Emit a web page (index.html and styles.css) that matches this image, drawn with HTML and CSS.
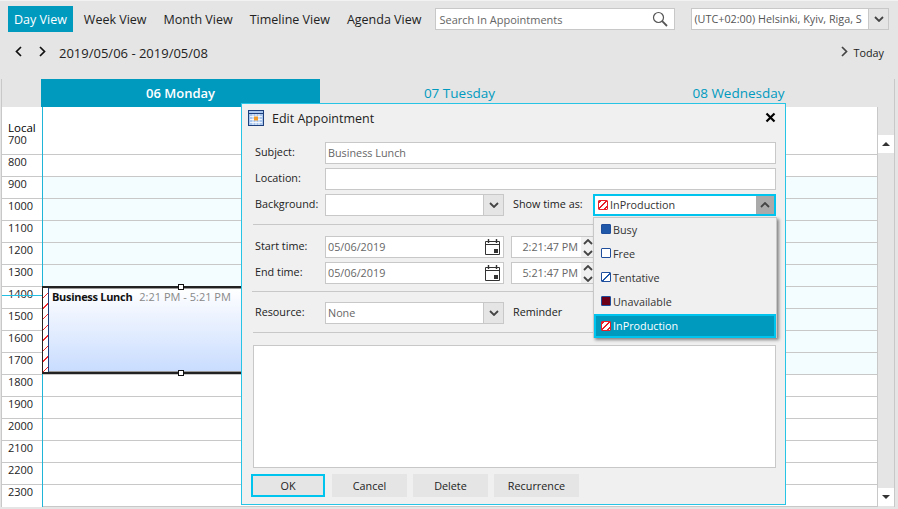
FILE: index.html
```html
<!DOCTYPE html>
<html lang="en">
<head>
    <meta charset="UTF-8">
    <meta name="viewport" content="width=device-width, initial-scale=1.0">
    <title>Scheduler</title>
    <link rel="stylesheet" href="styles.css">
</head>
<body>
    <div class="toolbar">
        <a class="tab active">Day View</a>
        <a class="tab">Week View</a>
        <a class="tab">Month View</a>
        <a class="tab">Timeline View</a>
        <a class="tab">Agenda View</a>
        <div class="search">
            <span>Search In Appointments</span>
            <svg width="16" height="16" viewBox="0 0 16 16" fill="none" stroke="#555">
                <circle cx="6.5" cy="6.5" r="5" stroke-width="1.2"/>
                <path d="M10.2 10.2L15 15" stroke-width="1.8"/>
            </svg>
        </div>
        <div class="timezone">
            <span>(UTC+02:00) Helsinki, Kyiv, Riga, S</span>
            <div class="drop-btn"><svg class="chev" viewBox="0 0 10 6"><path d="M1 1l4 4 4-4"/></svg></div>
        </div>
    </div>

    <div class="navrow">
        <svg class="nav-chev" viewBox="0 0 7 11"><path d="M6 1L1.5 5.5 6 10"/></svg>
        <svg class="nav-chev second" viewBox="0 0 7 11"><path d="M1 1l4.5 4.5L1 10"/></svg>
        <span class="range">2019/05/06 - 2019/05/08</span>
        <div class="today">
            <svg class="nav-chev grey" viewBox="0 0 7 11"><path d="M1 1l4.5 4.5L1 10"/></svg>
            <span>Today</span>
        </div>
    </div>

    <div class="scheduler">
        <div class="dayheads">
            <div class="dayhead current">06 Monday</div>
            <div class="dayhead">07 Tuesday</div>
            <div class="dayhead">08 Wednesday</div>
        </div>
        <div class="schedbody">
            <div class="times">
                <div class="local">Local</div>
                <div class="hour first">700</div>
                <div class="hour">800</div>
                <div class="hour">900</div>
                <div class="hour">1000</div>
                <div class="hour">1100</div>
                <div class="hour">1200</div>
                <div class="hour">1300</div>
                <div class="hour">1400<i class="nowline"></i></div>
                <div class="hour">1500</div>
                <div class="hour">1600</div>
                <div class="hour">1700</div>
                <div class="hour">1800</div>
                <div class="hour">1900</div>
                <div class="hour">2000</div>
                <div class="hour">2100</div>
                <div class="hour">2200</div>
                <div class="hour">2300</div>
            </div>
            <div class="slots">
                <div class="slot first"></div>
                <div class="slot"></div>
                <div class="slot work"></div>
                <div class="slot work"></div>
                <div class="slot work"></div>
                <div class="slot work"></div>
                <div class="slot work"></div>
                <div class="slot work"></div>
                <div class="slot work"></div>
                <div class="slot work"></div>
                <div class="slot work"></div>
                <div class="slot"></div>
                <div class="slot"></div>
                <div class="slot"></div>
                <div class="slot"></div>
                <div class="slot"></div>
                <div class="slot"></div>
                <div class="appointment">
                    <div class="hatch"></div>
                    <div class="appt-text"><b>Business Lunch</b><span>2:21 PM - 5:21 PM</span></div>
                    <i class="handle top"></i>
                    <i class="handle bottom"></i>
                </div>
            </div>
            <div class="scrollbar">
                <div class="scroll-btn"><i class="arrow up"></i></div>
                <div class="scroll-btn"><i class="arrow down"></i></div>
            </div>
        </div>
    </div>

    <div class="dialog">
        <div class="dialog-title">
            <svg width="16" height="16" viewBox="0 0 16 16">
                <rect x="0.5" y="0.5" width="15" height="15" fill="#a9c6ee" stroke="#1d3f7c"/>
                <path d="M1 3.5h14" stroke="#1d3f7c"/>
                <path d="M2 6.5h12M2 9.5h12M2 12.5h12M5 4v11M8 4v11M11 4v11" stroke="#fff" stroke-width="0.8"/>
                <rect x="6" y="6.5" width="4" height="4" fill="#f09a2a"/>
            </svg>
            <span>Edit Appointment</span>
            <svg class="close" width="11" height="11" viewBox="0 0 11 11"><path d="M1.5 1.5l8 8M9.5 1.5l-8 8" stroke="#000" stroke-width="2.2" fill="none"/></svg>
        </div>
        <div class="dialog-body">
            <div class="row">
                <label>Subject:</label>
                <div class="field grow value">Business Lunch</div>
            </div>
            <div class="row">
                <label>Location:</label>
                <div class="field grow"></div>
            </div>
            <div class="row">
                <label>Background:</label>
                <div class="field half"><span class="fill"></span><div class="drop-btn"><svg class="chev" viewBox="0 0 10 6"><path d="M1 1l4 4 4-4"/></svg></div></div>
                <label class="side">Show time as:</label>
                <div class="field show-select">
                    <span class="fill"><i class="swatch production"></i>InProduction</span>
                    <div class="drop-btn open"><svg class="chev" viewBox="0 0 10 6"><path d="M1 5l4-4 4 4"/></svg></div>
                </div>
            </div>
            <hr class="first-rule">
            <div class="row">
                <label>Start time:</label>
                <div class="field half value"><span class="fill">05/06/2019</span>
                    <svg class="cal" width="15" height="16" viewBox="0 0 15 16" fill="none" stroke="#333"><path d="M.5 2.5h14v13H.5zM.5 5.5h14"/><path d="M3.5 0v4M11.5 0v4" stroke-width="1.4"/><rect x="9" y="10" width="4" height="4" fill="#333" stroke="none"/></svg>
                </div>
                <div class="field time"><span class="fill">2:21:47 PM</span><div class="spin"><svg class="chev" viewBox="0 0 10 6"><path d="M1 5l4-4 4 4"/></svg><svg class="chev" viewBox="0 0 10 6"><path d="M1 1l4 4 4-4"/></svg></div></div>
            </div>
            <div class="row">
                <label>End time:</label>
                <div class="field half value"><span class="fill">05/06/2019</span>
                    <svg class="cal" width="15" height="16" viewBox="0 0 15 16" fill="none" stroke="#333"><path d="M.5 2.5h14v13H.5zM.5 5.5h14"/><path d="M3.5 0v4M11.5 0v4" stroke-width="1.4"/><rect x="9" y="10" width="4" height="4" fill="#333" stroke="none"/></svg>
                </div>
                <div class="field time"><span class="fill">5:21:47 PM</span><div class="spin"><svg class="chev" viewBox="0 0 10 6"><path d="M1 5l4-4 4 4"/></svg><svg class="chev" viewBox="0 0 10 6"><path d="M1 1l4 4 4-4"/></svg></div></div>
            </div>
            <hr class="second-rule">
            <div class="row">
                <label>Resource:</label>
                <div class="field half value"><span class="fill">None</span><div class="drop-btn"><svg class="chev" viewBox="0 0 10 6"><path d="M1 1l4 4 4-4"/></svg></div></div>
                <label class="side">Reminder</label>
            </div>
            <hr class="third-rule">
            <div class="notes"></div>
            <div class="buttons">
                <button class="focus">OK</button>
                <button>Cancel</button>
                <button>Delete</button>
                <button class="wide">Recurrence</button>
            </div>
        </div>
        <ul class="dropdown">
            <li><i class="swatch busy"></i>Busy</li>
            <li><i class="swatch free"></i>Free</li>
            <li><i class="swatch tentative"></i>Tentative</li>
            <li><i class="swatch unavailable"></i>Unavailable</li>
            <li class="selected"><i class="swatch production"></i>InProduction</li>
        </ul>
    </div>
</body>
</html>
```

FILE: styles.css
```css
* {
    box-sizing: border-box;
}
body {
    margin: 0;
    height: 509px;
    width: 898px;
    overflow: hidden;
    position: relative;
    background: #e5e5e5;
    border-top: 1px solid #f2f2f2;
    font-family: "Open Sans", "Noto Sans", sans-serif;
    font-size: 10.8px;
    color: #222;
}

/* top bar */
.toolbar {
    display: flex;
    align-items: center;
    height: 31px;
    padding: 5px 0 0 8px;
}
.tab {
    display: flex;
    align-items: center;
    height: 26px;
    padding: 0 6px;
    margin-right: 5px;
    font-size: 12.5px;
}
.tab.active {
    background: #009abf;
    color: #fff;
}
.search {
    display: flex;
    justify-content: space-between;
    align-items: center;
    width: 240px;
    height: 22px;
    margin-left: 3px;
    padding: 0 6px 0 3px;
    background: #fff;
    border: 1px solid #c8c8c8;
    color: #666;
    font-size: 11px;
}
.timezone {
    display: flex;
    width: 198px;
    height: 22px;
    margin-left: 16px;
    background: #fff;
    border: 1px solid #c8c8c8;
    color: #555;
}
.timezone span {
    flex: 1;
    padding-left: 2px;
    line-height: 20px;
    white-space: nowrap;
    overflow: hidden;
}
.drop-btn {
    display: flex;
    justify-content: center;
    align-items: center;
    width: 20px;
    background: #e5e5e5;
    border-left: 1px solid #c8c8c8;
}
.chev {
    width: 10px;
    height: 6px;
    fill: none;
    stroke: #444;
    stroke-width: 1.8;
}

/* date row */
.navrow {
    display: flex;
    align-items: center;
    height: 47px;
    padding: 0 14px 6px 15px;
}
.nav-chev {
    width: 7px;
    height: 11px;
    margin-bottom: 3px;
    fill: none;
    stroke: #111;
    stroke-width: 1.7;
}
.nav-chev.second {
    margin-left: 17px;
}
.nav-chev.grey {
    stroke: #444;
}
.range {
    margin-left: 13px;
    font-size: 13px;
}
.today {
    display: flex;
    align-items: center;
    gap: 6px;
    margin-left: auto;
}

/* scheduler */
.scheduler {
    margin-left: 1px;
    width: 894px;
    border-left: 1px solid #c8c8c8;
    border-right: 1px solid #c8c8c8;
}
.dayheads {
    display: flex;
    height: 28px;
    padding-left: 39px;
}
.dayhead {
    width: 279px;
    text-align: center;
    line-height: 29px;
    font-size: 13.5px;
    color: #009abf;
}
.dayhead.current {
    background: #009abf;
    color: #fff;
    font-size: 13px;
    font-weight: 600;
}
.schedbody {
    display: flex;
    height: 400px;
}
.times {
    width: 40px;
    background: #fff;
    padding-left: 6px;
}
.local {
    height: 25px;
    padding-top: 16px;
    line-height: 9px;
    font-size: 11.5px;
    color: #000;
}
.hour {
    position: relative;
    height: 22px;
    line-height: 14px;
    font-size: 11px;
    margin-left: -6px;
    padding-left: 6px;
    border-top: 1px solid #c8c8c8;
}
.hour.first {
    border-top: 0;
    padding-top: 1px;
}
.nowline {
    position: absolute;
    left: 0;
    right: 0;
    top: 8px;
    height: 1px;
    background: #23bfe2;
}
.slots {
    position: relative;
    width: 836px;
    background: #fff;
    border-left: 1px solid #1fb5d8;
    border-right: 1px solid #c8c8c8;
}
.slot {
    height: 22px;
    border-bottom: 1px solid #c8c8c8;
}
.slot.first {
    height: 48px;
}
.slot.work {
    background: #f3fcfe;
}
.appointment {
    position: absolute;
    left: -1px;
    top: 179px;
    display: flex;
    width: 300px;
    height: 88px;
    background: linear-gradient(#fff, #c8dcff);
    border-top: 2px solid #222;
    border-bottom: 2px solid #222;
    border-left: 1px solid #222;
    box-shadow: inset 0 1px 0 #999, inset 0 -1px 0 #999;
}
.hatch {
    width: 6px;
    background: repeating-linear-gradient(135deg, #fff 0, #fff 6.5px, #f0262e 6.5px, #f0262e 7.5px);
    border-right: 1px solid #1d3f7c;
}
.appt-text {
    padding: 1px 0 0 3px;
    font-size: 11px;
    color: #888;
    white-space: nowrap;
}
.appt-text b {
    color: #111;
    margin-right: 7px;
    letter-spacing: -.3px;
}
.handle {
    position: absolute;
    left: 135px;
    width: 6px;
    height: 6px;
    background: #fff;
    border: 1px solid #111;
}
.handle.top {
    top: -4px;
}
.handle.bottom {
    bottom: -4px;
}
.scrollbar {
    display: flex;
    flex-direction: column;
    justify-content: space-between;
    width: 16px;
    padding: 28px 0 1px;
}
.scroll-btn {
    display: flex;
    justify-content: center;
    align-items: center;
    height: 18px;
    background: #fff;
}
.arrow {
    width: 0;
    height: 0;
    border-left: 4px solid transparent;
    border-right: 4px solid transparent;
}
.arrow.up {
    border-bottom: 4px solid #333;
}
.arrow.down {
    border-top: 4px solid #333;
}

/* edit dialog */
.dialog {
    position: absolute;
    left: 241px;
    top: 102px;
    width: 545px;
    height: 402px;
    background: #f0f0f0;
    border: 1px solid #27c4e6;
}
.dialog-title {
    display: flex;
    align-items: center;
    height: 28px;
    padding: 0 8px 0 6px;
    font-size: 12.5px;
}
.dialog-title span {
    margin-left: 8px;
}
.close {
    margin-left: auto;
    margin-right: 1px;
    margin-bottom: 2px;
}
.dialog-body {
    padding: 10px 9px 0 12px;
}
.row {
    display: flex;
    align-items: center;
    height: 22px;
    margin-bottom: 4px;
}
.row label {
    width: 71px;
    padding: 0 0 4px 1px;
    flex: none;
}
.row label.side {
    width: 80px;
    margin-left: 9px;
    padding-left: 0;
}
.field {
    display: flex;
    align-items: stretch;
    height: 22px;
    background: #fff;
    border: 1px solid #c8c8c8;
    line-height: 20px;
}
.field.grow {
    flex: 1;
    padding-left: 2px;
}
.value {
    color: #666;
}
.field.half {
    width: 179px;
}
.fill {
    flex: 1;
    padding-left: 2px;
}
.cal {
    align-self: center;
    margin-right: 3px;
}
.show-select {
    width: 183px;
    border: 2px solid #00c3ee;
    line-height: 18px;
    color: #333;
}
.show-select .fill {
    display: flex;
    align-items: center;
    gap: 2px;
    padding-left: 3px;
}
.drop-btn.open {
    width: 18px;
    background: #aaa;
    border-left: 0;
}
.field.time {
    width: 85px;
    margin-left: 7px;
    color: #666;
}
.time .fill {
    text-align: right;
    padding-right: 3px;
}
.spin {
    display: flex;
    flex-direction: column;
    justify-content: center;
    align-items: center;
    gap: 5px;
    width: 14px;
    background: #f0f0f0;
}
hr {
    height: 1px;
    border: 0;
    margin: 0;
    background: #c8c8c8;
}
.first-rule {
    margin: 8px 0 11px -1px;
}
.second-rule {
    margin: 7px 0 10px -2px;
}
.third-rule {
    margin: 8px 0 12px -1px;
}
.notes {
    height: 123px;
    margin-left: -1px;
    background: #fff;
    border: 1px solid #c8c8c8;
}
.buttons {
    display: flex;
    gap: 6px;
    margin: 6px 0 0 -3px;
}
button {
    width: 75px;
    height: 23px;
    padding: 0;
    background: #e5e5e5;
    border: 0;
    font-family: inherit;
    font-size: 10.8px;
    color: #222;
}
button.focus {
    width: 74px;
    margin-right: 1px;
    border: 2px solid #00c3ee;
}
button.wide {
    width: 85px;
}
.dropdown {
    position: absolute;
    left: 351px;
    top: 113px;
    width: 184px;
    height: 121px;
    margin: 0;
    padding: 0;
    list-style: none;
    background: #f0f0f0;
    border: 1px solid #c8c8c8;
    box-shadow: 2px 2px 3px rgba(0, 0, 0, .45);
    color: #333;
}
.dropdown li {
    display: flex;
    align-items: center;
    gap: 2px;
    height: 24px;
    padding-left: 7px;
    padding-bottom: 2px;
}
.dropdown li.selected {
    padding-left: 5px;
    padding-bottom: 1px;
    background: #009abf;
    border: 2px solid #00c3ee;
    color: #fff;
}
.swatch {
    flex: none;
    width: 10px;
    height: 10px;
    border: 1px solid #1f4f9c;
    border-radius: 1px;
}
.swatch.busy {
    background: #1f58a8;
}
.swatch.free {
    background: #fff;
}
.swatch.tentative {
    background: linear-gradient(135deg, #fff 50%, #1f58a8 50%, #1f58a8 62%, #fff 62%);
}
.swatch.unavailable {
    background: #6b0018;
}
.swatch.production {
    border-color: #e8202a;
    background: repeating-linear-gradient(135deg, #e8202a 0, #e8202a 1.5px, #fff 1.5px, #fff 4.5px);
}
```
